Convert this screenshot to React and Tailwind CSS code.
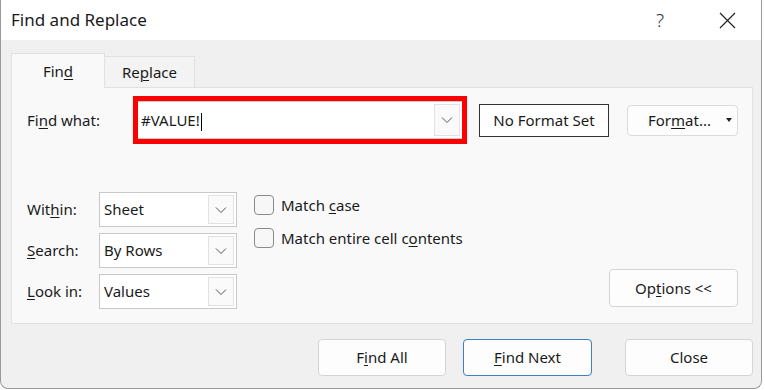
import React from "react";

const font = { fontFamily: '"Noto Sans", "Open Sans", Arial, sans-serif' };

const U = ({ children }) => <span className="underline underline-offset-2 decoration-1">{children}</span>;

const Chevron = () => (
  <svg width="12" height="8" viewBox="0 0 12 8" fill="none">
    <path d="M1 1.5 L6 6.5 L11 1.5" stroke="#555" strokeWidth="1" />
  </svg>
);

const Select = ({ value }) => (
  <div className="flex h-[35px] w-[138px] items-center border border-[#c8c8c8] bg-white pl-[4px] pr-[2px]">
    <span className="flex-1 text-[15px] text-[#1a1a1a]">{value}</span>
    <div className="flex h-[29px] w-[26px] items-center justify-center border border-[#e2e2e2] bg-[#fafafa]">
      <Chevron />
    </div>
  </div>
);

const Checkbox = ({ children }) => (
  <label className="flex items-center gap-[7px] text-[15px] text-[#1a1a1a]">
    <span className="h-[20px] w-[20px] rounded-[4px] border border-[#8a8a8a] bg-[#f7f7f7]" />
    <span>{children}</span>
  </label>
);

const Button = ({ children, primary, className = "" }) => (
  <button
    className={`flex h-[37px] w-[128px] items-center justify-center rounded-[4px] border bg-[#fdfdfd] text-[15px] text-[#1a1a1a] ${
      primary ? "border-[#3d7fc4]" : "border-[#d4d4d4]"
    } ${className}`}
  >
    <span>{children}</span>
  </button>
);

export default function App() {
  return (
    <div className="h-[390px] w-[765px] bg-white" style={font}>
      <div className="flex h-[389px] w-[762px] flex-col overflow-hidden rounded-b-[8px] border-x border-b border-[#9a9a9a] bg-[#f0f0f0]">
        {/* title bar */}
        <div className="flex h-[40px] items-center bg-white pl-[10px]">
          <span className="text-[17px] text-[#1a1a1a]">Find and Replace</span>
          <span className="ml-auto mr-[55px] text-[19px] font-light text-[#333]">?</span>
          <svg className="mr-[25px]" width="17" height="17" viewBox="0 0 17 17">
            <path d="M1 1 L16 16 M16 1 L1 16" stroke="#222" strokeWidth="1.2" />
          </svg>
        </div>

        {/* tabs */}
        <div className="ml-[10px] mt-[13px] flex items-end">
          <div className="relative z-10 -mb-px flex h-[35px] w-[94px] items-center justify-center border-x border-t border-[#e0e0e0] bg-[#f9f9f9] text-[15px] text-[#1a1a1a]">
            <span>
              Fin<U>d</U>
            </span>
          </div>
          <div className="flex h-[31px] w-[90px] items-center justify-center border-r border-t border-[#e0e0e0] bg-[#f3f3f3] text-[15px] text-[#1a1a1a]">
            <span>
              Re<U>p</U>lace
            </span>
          </div>
        </div>

        {/* panel */}
        <div className="ml-[10px] flex h-[237px] w-[742px] flex-col border border-[#e0e0e0] bg-[#f9f9f9]">
          <div className="mt-[8px] flex items-center">
            <span className="ml-[15px] w-[106px] text-[15px] text-[#1a1a1a]">
              Fi<U>n</U>d what:
            </span>
            <div className="h-[48px] w-[334px] border-[5px] border-[#ff0000] bg-white">
              <div className="flex h-full items-center border-y border-[#c8c8c8] pl-[3px] pr-[2px]">
                <span className="flex-1 text-[15px] text-[#1a1a1a]">
                  #VALUE!<span className="ml-px inline-block h-[18px] w-px bg-black align-middle" />
                </span>
                <div className="flex h-[32px] w-[26px] items-center justify-center border border-[#e2e2e2] bg-[#fafafa]">
                  <Chevron />
                </div>
              </div>
            </div>
            <div className="ml-[12px] flex h-[33px] w-[130px] items-center justify-center border border-[#333] bg-white text-[15px] text-[#1a1a1a]">
              No Format Set
            </div>
            <div className="relative ml-[18px] flex h-[31px] w-[111px] items-center justify-center rounded-[4px] border border-[#dcdcdc] bg-[#fdfdfd] text-[15px] text-[#1a1a1a]">
              <span className="-ml-[6px]">
                For<U>m</U>at...
              </span>
              <span className="absolute right-[5px] top-[12px] h-0 w-0 border-x-[3px] border-t-[4px] border-x-transparent border-t-[#222]" />
            </div>
          </div>

          <div className="mt-[48px] flex">
            <div className="ml-[15px] flex flex-col gap-[6px]">
              {[
                [<>Wit<U>h</U>in:</>, "Sheet"],
                [<><U>S</U>earch:</>, "By Rows"],
                [<><U>L</U>ook in:</>, "Values"],
              ].map(([label, value], i) => (
                <div key={i} className="flex items-center">
                  <span className="w-[72px] text-[15px] text-[#1a1a1a]">{label}</span>
                  <Select value={value} />
                </div>
              ))}
            </div>
            <div className="ml-[17px] mt-[2px] flex flex-col gap-[10px]">
              <Checkbox>
                Match <U>c</U>ase
              </Checkbox>
              <Checkbox>
                Match entire cell c<U>o</U>ntents
              </Checkbox>
            </div>
            <div className="ml-auto mr-[14px] mt-[77px]">
              <button className="flex h-[38px] w-[129px] items-center justify-center rounded-[4px] border border-[#d4d4d4] bg-[#fdfdfd] text-[15px] text-[#1a1a1a]">
                <span>
                  Op<U>t</U>ions &lt;&lt;
                </span>
              </button>
            </div>
          </div>
        </div>

        {/* footer buttons */}
        <div className="mt-[15px] flex pl-[317px]">
          <Button>
            F<U>i</U>nd All
          </Button>
          <Button primary className="ml-[17px] w-[129px]">
            <U>F</U>ind Next
          </Button>
          <Button className="ml-[33px]">Close</Button>
        </div>
      </div>
    </div>
  );
}
